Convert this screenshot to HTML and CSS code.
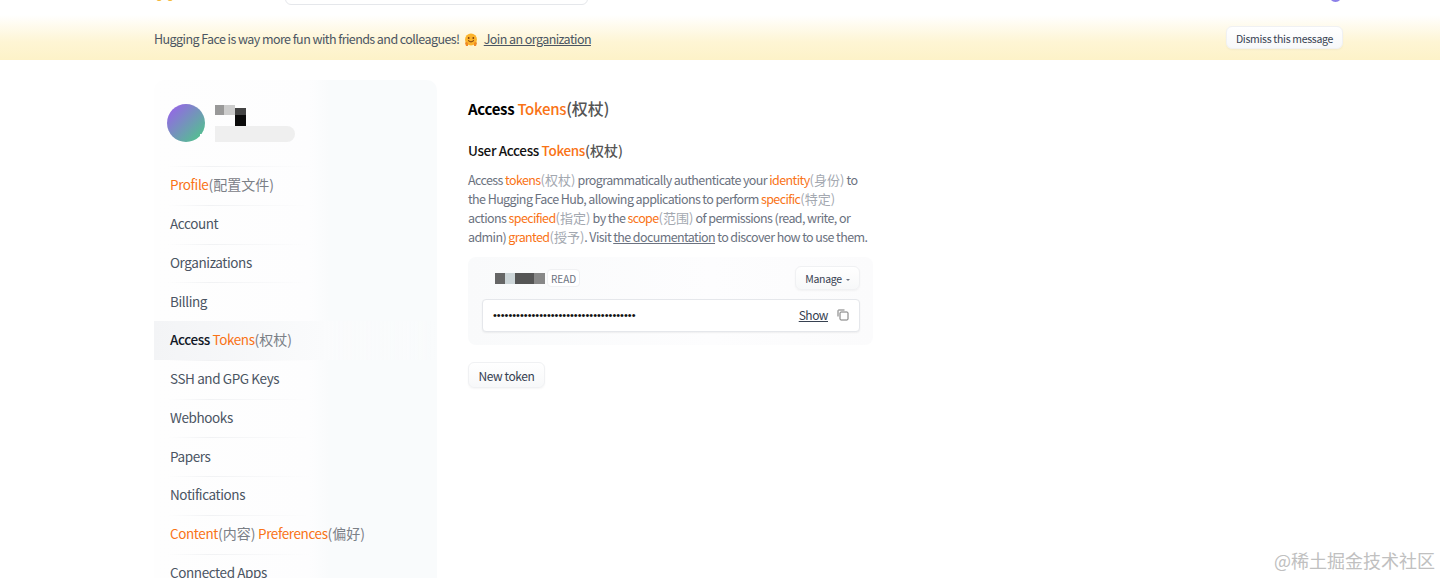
FILE: index.html
```html
<!DOCTYPE html>
<html lang="en">
<head>
<meta charset="utf-8">
<title>Access Tokens</title>
<link rel="stylesheet" href="styles.css">
</head>
<body>
<header class="topbar">
  <svg class="logo" width="20" height="4" viewBox="0 0 20 4"><path d="M1 0h6q0 3-3 3T1 0zM12 0h6q0 3-3 3t-3-3z" fill="#f5b52e"/></svg>
  <div class="search"></div>
  <div class="user-dot"></div>
</header>
<section class="banner">
  <p class="banner-text">Hugging Face is way more fun with friends and colleagues! <svg class="hug" width="14" height="14" viewBox="0 0 14 14"><circle cx="7" cy="6.5" r="6" fill="#fbb32c"/><path d="M4 7.5q3 3 6 0" fill="none" stroke="#7a3c10" stroke-width="1"/><circle cx="4.7" cy="5" r=".9" fill="#7a3c10"/><circle cx="9.3" cy="5" r=".9" fill="#7a3c10"/><path d="M1 10q1-2 3 0v3H2zM13 10q-1-2-3 0v3h2z" fill="#f08a24"/></svg><a class="join" href="#">Join an organization</a></p>
  <button class="btn dismiss">Dismiss this message</button>
</section>
<main class="layout">
  <aside class="sidebar">
    <div class="profile">
      <div class="avatar"></div>
      <div class="masked">
        <div class="mosaic-row">
          <span class="m m1"></span><span class="m m2"></span><span class="m m3"></span>
        </div>
        <div class="masked-pill"></div>
      </div>
    </div>
    <nav class="menu">
      <a class="item" href="#"><span class="hl">Profile</span><span class="zh">(配置文件)</span></a>
      <a class="item" href="#">Account</a>
      <a class="item" href="#">Organizations</a>
      <a class="item" href="#">Billing</a>
      <a class="item active" href="#"><span class="strong">Access&nbsp;</span><span class="hl">Tokens</span><span class="zh">(权杖)</span></a>
      <a class="item" href="#">SSH and GPG Keys</a>
      <a class="item" href="#">Webhooks</a>
      <a class="item" href="#">Papers</a>
      <a class="item" href="#">Notifications</a>
      <a class="item" href="#"><span class="hl">Content</span><span class="zh">(内容)</span><span class="hl">&nbsp;Preferences</span><span class="zh">(偏好)</span></a>
      <a class="item" href="#">Connected Apps</a>
    </nav>
  </aside>
  <div class="content">
    <h1 class="title">Access <span class="hl">Tokens</span><span class="zh">(权杖)</span></h1>
    <h2 class="subtitle">User Access <span class="hl">Tokens</span><span class="zh">(权杖)</span></h2>
    <p class="desc">Access <span class="hl">tokens</span><span class="zh2">(权杖)</span> programmatically authenticate your <span class="hl">identity</span><span class="zh2">(身份)</span> to the Hugging Face Hub, allowing applications to perform <span class="hl">specific</span><span class="zh2">(特定)</span> actions <span class="hl">specified</span><span class="zh2">(指定)</span> by the <span class="hl">scope</span><span class="zh2">(范围)</span> of permissions (read, write, or admin) <span class="hl">granted</span><span class="zh2">(授予)</span>. Visit <a class="doc" href="#">the documentation</a> to discover how to use them.</p>
    <div class="token-card">
      <div class="token-head">
        <div class="token-name">
          <span class="t t1"></span><span class="t t2"></span><span class="t t3"></span><span class="t t4"></span>
          <span class="badge">READ</span>
        </div>
        <button class="btn manage">Manage <span class="caret"></span></button>
      </div>
      <div class="token-input">
        <span class="dots">•••••••••••••••••••••••••••••••••••••</span>
        <a class="show" href="#">Show</a>
        <svg class="copy" width="12" height="12" viewBox="0 0 12 12" fill="none" stroke="#777" stroke-width="1"><path d="M1 7.5V1.5A.5.5 0 0 1 1.5 1h6"/><rect x="3" y="3" width="8" height="8" rx="1"/></svg>
      </div>
    </div>
    <button class="btn new-token">New token</button>
  </div>
</main>
<div class="watermark">@稀土掘金技术社区</div>
</body>
</html>
```

FILE: styles.css
```css
* { box-sizing: border-box; }
html, body { height: 100%; overflow: hidden; }
body {
  margin: 0;
  position: relative;
  background: #fff;
  color: #374151;
  font-family: "Noto Sans CJK SC", "Noto Sans", sans-serif;
  font-size: 14px;
}
.topbar {
  height: 15px;
  display: flex;
  align-items: flex-end;
  padding: 0 98px 10px 155px;
}
.logo { flex: none; margin-bottom: 3px; }
.search {
  flex: none;
  width: 303px;
  height: 30px;
  margin-left: 110px;
  border: 1px solid #e5e7eb;
  border-radius: 6px;
  background: #fff;
}
.user-dot {
  flex: none;
  width: 13px;
  height: 13px;
  margin-left: auto;
  margin-bottom: 3px;
  border-radius: 50%;
  background: #8b7fe8;
}
.banner {
  height: 45px;
  display: flex;
  align-items: center;
  justify-content: space-between;
  padding: 0 97px 0 154px;
  background: linear-gradient(to bottom, #fff 0%, #fef5d4 60%, #fdf2c8 100%);
}
.banner-text { margin: 2px 0 0; font-size: 12.5px; letter-spacing: -.57px; color: #4b5563; }
.hug { margin: 0 6px 0 2px; vertical-align: -3px; }
.join { color: #4b5563; text-decoration: underline; }
.btn {
  font-family: inherit;
  color: #374151;
  border: 1px solid #f0f1f3;
  border-radius: 6px;
  background: linear-gradient(to bottom, #fff, #f7f8f9);
  box-shadow: 0 1px 2px rgba(0,0,0,.04);
  cursor: pointer;
  padding: 0;
}
.dismiss { width: 117px; height: 23px; padding-top: 1px; font-size: 10.5px; letter-spacing: -.3px; }
.layout {
  display: flex;
  align-items: flex-start;
  padding: 20px 0 0 154px;
  gap: 31px;
}
.sidebar {
  flex: none;
  width: 283px;
  border-radius: 10px 10px 0 0;
  background: linear-gradient(to right, #fefefe 0%, #fdfdfe 55%, #f9fbfc 62%, #f9fbfc 100%);
  padding-top: 24px;
}
.profile { display: flex; gap: 10px; padding-left: 13px; height: 62px; }
.avatar {
  position: relative;
  width: 38px;
  height: 38px;
  border-radius: 50%;
  background: linear-gradient(135deg, #9567e6 10%, #52c18f 90%);
}
.avatar::after {
  content: "";
  position: absolute;
  right: 0;
  bottom: 2px;
  width: 5px;
  height: 6px;
  background: #fefefe;
}
.masked { display: flex; flex-direction: column; padding-top: 1px; }
.mosaic-row { display: flex; height: 21px; }
.m { display: block; }
.m1 { width: 9px; height: 10px; background: #999; }
.m2 { width: 11px; height: 10px; background: #ccc; }
.m3 { width: 11px; height: 21px; background: linear-gradient(to bottom, #fff 0 3px, #444 3px 10px, #0a0a0a 10px); }
.masked-pill { width: 80px; height: 16px; background: #efefef; border-radius: 0 8px 8px 0; }
.menu { display: flex; flex-direction: column; }
.item {
  height: 38.75px;
  display: flex;
  align-items: center;
  padding: 0 0 3px 16px;
  font-size: 13.5px;
  letter-spacing: -.4px;
  color: #4b5563;
  text-decoration: none;
  border-top: 1px solid;
  border-image: linear-gradient(to right, transparent 5%, #f1f2f4 20%, transparent 55%) 1;
  white-space: pre;
}
.active { background: linear-gradient(to right, #f3f4f6, #fafbfc 60%, transparent); border-image: none; border-top-color: transparent; }
.strong { color: #111827; font-weight: 500; }
.hl { color: #f97316; }
.zh { color: #7b8087; font-size: 14px; letter-spacing: 0; }
.zh2 { color: #a3a8b0; letter-spacing: 0; font-size: 13px; }
.content { flex: none; width: 405px; padding-top: 17px; }
.title { margin: 0; font-size: 15px; letter-spacing: -.3px; line-height: 22px; font-weight: 700; color: #000; }
.subtitle { margin: 19px 0 0; font-size: 13.5px; letter-spacing: -.35px; line-height: 22px; font-weight: 500; color: #111; }
.title .hl, .subtitle .hl { font-weight: 500; }
.title .zh { font-size: 16px; font-weight: 500; color: #555; }
.subtitle .zh { font-size: 14px; font-weight: 500; color: #555; }
.desc { margin: 9px 0 0; font-size: 12.5px; letter-spacing: -.6px; line-height: 19px; color: #6b7280; }
.doc { color: #6b7280; text-decoration: underline; }
.token-card {
  margin-top: 11px;
  height: 88px;
  border-radius: 8px;
  background: linear-gradient(to right, #f9fafb, #fdfdfe 60%, #fbfbfc);
  padding: 9px 13px 0 14px;
}
.token-head { display: flex; justify-content: space-between; align-items: center; height: 24px; }
.token-name { display: flex; align-items: center; padding-left: 13px; }
.t { display: block; height: 11px; }
.t1 { width: 10px; background: #666; }
.t2 { width: 10px; background: #ccd5d8; }
.t3 { width: 19px; background: #555; }
.t4 { width: 11px; background: #888; }
.badge {
  margin-left: 2px;
  width: 33px;
  height: 18px;
  display: flex;
  align-items: center;
  justify-content: center;
  font-size: 10px;
  color: #6b7280;
  background: #fff;
  border: 1px solid #f0f1f3;
  border-radius: 4px;
}
.manage { width: 65px; height: 24px; font-size: 10.5px; letter-spacing: -.3px; }
.caret {
  display: inline-block;
  vertical-align: middle;
  margin-left: 2px;
  border: 2px solid transparent;
  border-top: 2px solid #6b7280;
  border-bottom: 0;
}
.token-input {
  margin-top: 9px;
  height: 33px;
  display: flex;
  align-items: center;
  padding: 0 10px 2px;
  background: #fff;
  border: 1px solid #e5e7eb;
  border-radius: 4px;
  box-shadow: 0 1px 2px rgba(0,0,0,.06);
}
.dots { font-family: "Liberation Sans", sans-serif; font-size: 11px; color: #111; flex: 1; }
.show { color: #374151; font-size: 12px; letter-spacing: -.5px; text-decoration: underline; }
.copy { margin-left: 9px; }
.new-token { display: block; margin-top: 17px; width: 77px; height: 26px; font-size: 12px; letter-spacing: -.4px; }
.watermark {
  position: absolute;
  right: 5px;
  bottom: 6px;
  font-size: 18px;
  line-height: 24px;
  color: #c0c0c0;
}
```
